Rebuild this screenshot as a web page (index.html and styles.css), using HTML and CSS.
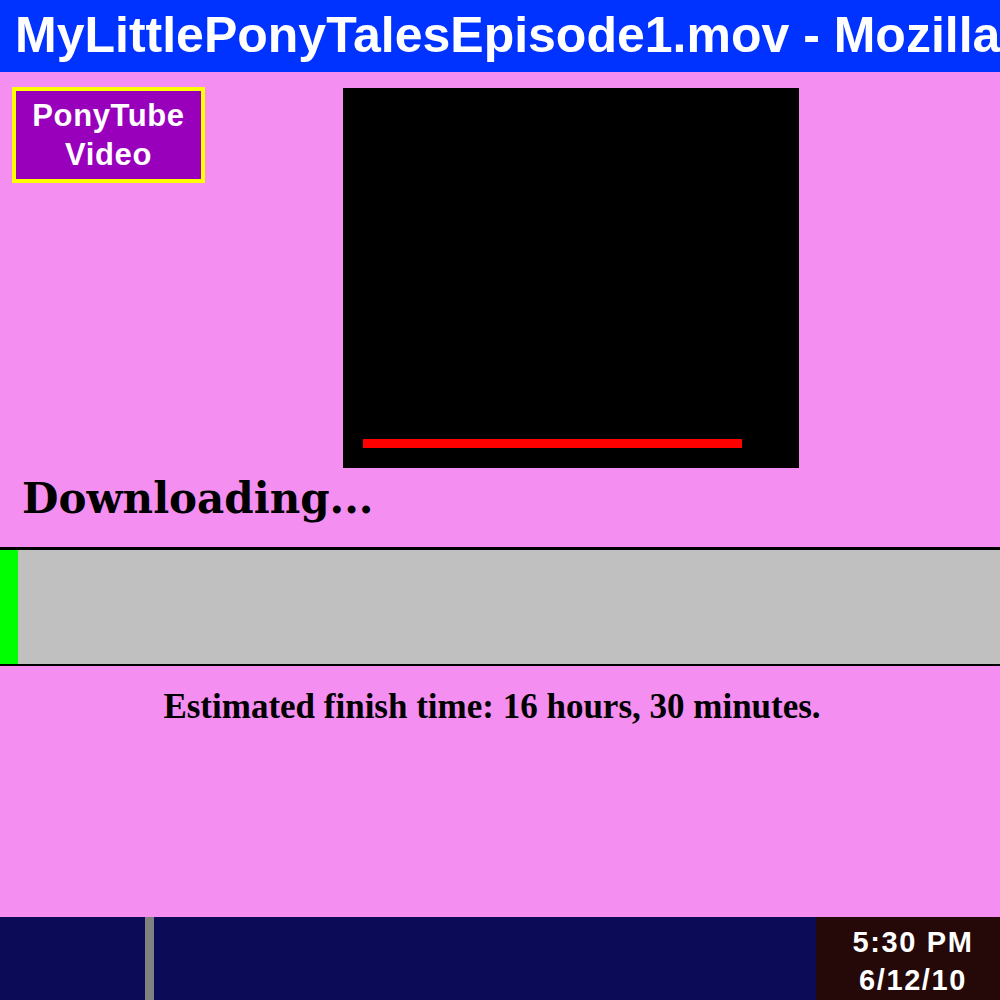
FILE: index.html
```html
<!DOCTYPE html>
<html>
<head>
<meta charset="utf-8">
<link rel="stylesheet" href="styles.css">
</head>
<body>
<div class="screen">
  <div class="titlebar">MyLittlePonyTalesEpisode1.mov - Mozilla</div>
  <div class="content">
    <div class="top">
      <div class="logo">PonyTube<br>Video</div>
      <div class="player"><div class="seek"></div></div>
    </div>
    <h1 class="status">Downloading...</h1>
    <div class="progress"><div class="fill" style="width:18px"></div></div>
    <p class="eta">Estimated finish time: 16 hours, 30 minutes.</p>
  </div>
  <div class="taskbar">
    <div class="start"></div>
    <div class="divider"></div>
    <div class="tasks"></div>
    <div class="clock">5:30 PM<br>6/12/10</div>
  </div>
</div>
</body>
</html>
```
FILE: styles.css
```css
html, body {
  margin: 0;
  padding: 0;
}
body {
  width: 1000px;
  height: 1000px;
  overflow: hidden;
  background: #f48ef0;
}
.screen {
  display: flex;
  flex-direction: column;
  height: 1000px;
}
.titlebar {
  height: 72px;
  background: #0033ff;
  color: #fff;
  font-family: "Liberation Sans", Arial, sans-serif;
  font-weight: bold;
  font-size: 50px;
  line-height: 70px;
  padding-left: 15px;
  white-space: nowrap;
  overflow: hidden;
}
.content {
  flex: 1;
  display: flex;
  flex-direction: column;
}
.top {
  display: flex;
  padding-top: 16px;
}
.logo {
  margin-left: 12px;
  margin-top: -1px;
  width: 185px;
  height: 88px;
  border: 4px solid #ffff00;
  background: #9900bb;
  color: #fff;
  font-family: "Liberation Sans", Arial, sans-serif;
  font-weight: bold;
  font-size: 31px;
  letter-spacing: 0.6px;
  line-height: 39px;
  text-align: center;
  display: flex;
  align-items: center;
  justify-content: center;
}
.player {
  margin-left: 138px;
  width: 456px;
  height: 380px;
  background: #000;
  display: flex;
  align-items: flex-end;
  padding-left: 20px;
  padding-bottom: 20px;
  box-sizing: border-box;
}
.seek {
  width: 379px;
  height: 9px;
  background: #ff0000;
}
.status {
  margin: 0;
  padding-left: 22px;
  font-family: "DejaVu Serif", "Liberation Serif", serif;
  font-weight: bold;
  font-size: 42px;
  line-height: 56px;
  height: 79px;
  padding-top: 3px;
  box-sizing: border-box;
  color: #000;
}
.progress {
  height: 114px;
  border-top: 3px solid #000;
  border-bottom: 2px solid #000;
  background: #c0c0c0;
  display: flex;
}
.fill {
  background: #00ff00;
}
.eta {
  margin: 0;
  padding-top: 21px;
  padding-right: 16px;
  text-align: center;
  font-family: "Liberation Serif", "Times New Roman", serif;
  font-weight: bold;
  font-size: 35px;
  line-height: 40px;
  color: #000;
}
.taskbar {
  height: 83px;
  background: #0b0b58;
  display: flex;
}
.start {
  width: 145px;
}
.divider {
  width: 9px;
  background: #808080;
}
.tasks {
  flex: 1;
}
.clock {
  width: 184px;
  background: #250808;
  color: #fff;
  font-family: "Liberation Sans", Arial, sans-serif;
  font-weight: bold;
  font-size: 29px;
  letter-spacing: 1.6px;
  line-height: 38px;
  text-align: center;
  padding-top: 6px;
  padding-left: 10px;
  box-sizing: border-box;
}
```
